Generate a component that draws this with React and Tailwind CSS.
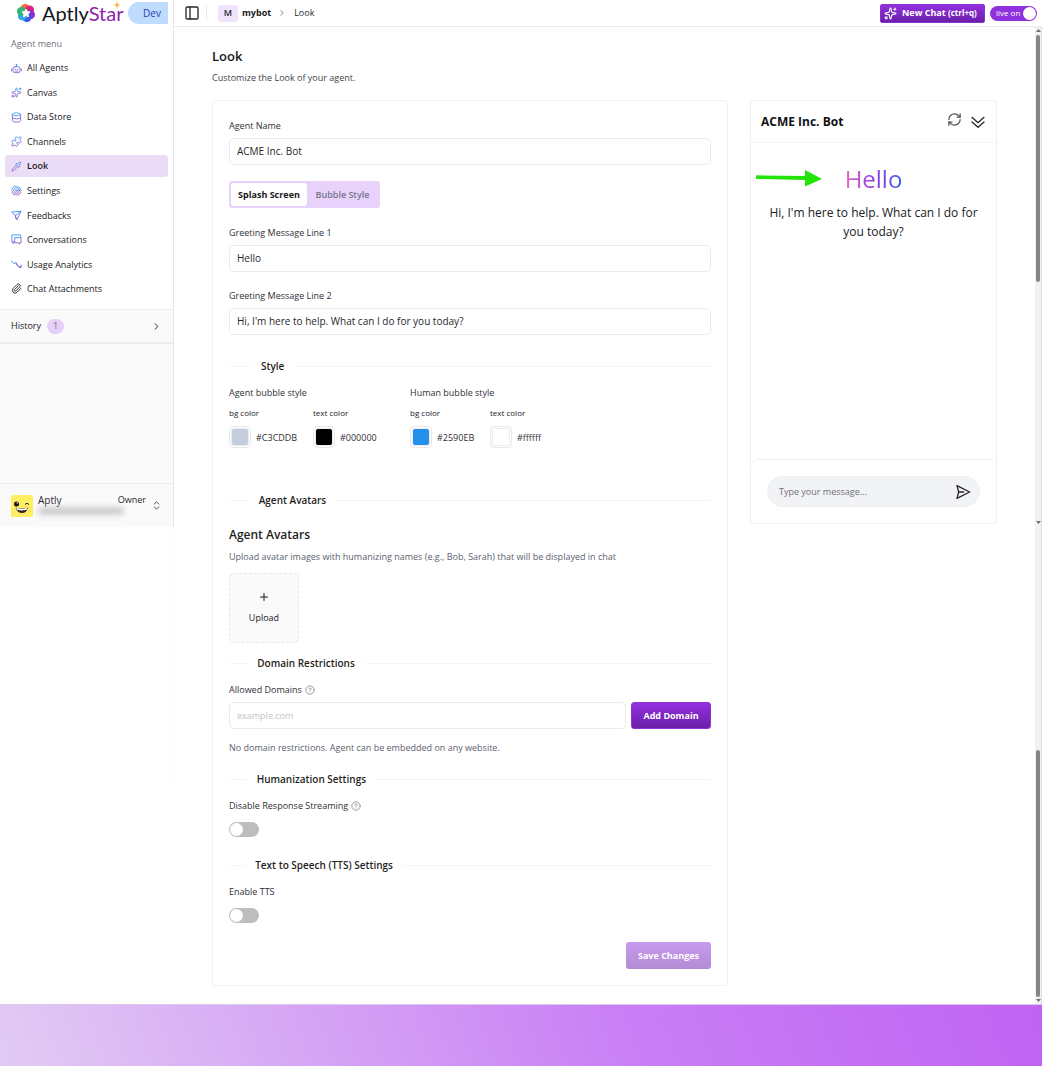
import React, { useState } from "react";
import {
  Sparkles, Database, Puzzle, Pipette, Paperclip, ChevronRight, ChevronsUpDown,
  PanelLeft, RefreshCw, Plus, CircleHelp,
} from "lucide-react";

function Glyph({ size = 12, stroke = "currentColor", strokeWidth = 2, children }) {
  return (
    <svg
      viewBox="0 0 24 24"
      width={size}
      height={size}
      fill="none"
      stroke={stroke}
      strokeWidth={strokeWidth}
      strokeLinecap="round"
      strokeLinejoin="round"
      className="shrink-0"
      aria-hidden="true"
    >
      {children}
    </svg>
  );
}

const RobotIcon = (p) => (
  <Glyph {...p}>
    <rect x="4" y="8" width="16" height="13" rx="5" />
    <path d="M12 8V3M11 3h2M1.500 13v4M22.500 13v4M9 13v1.500M15 13v1.500M9.500 17.500h5" />
  </Glyph>
);

const GearIcon = (p) => (
  <Glyph {...p}>
    <path d="M12 1.500l2.700 2.200 3.400-.5 1.200 3.200 3.200 1.300-.6 3.400L24 12l-2.100 2.800.6 3.400-3.200 1.200-1.200 3.200-3.400-.5L12 23l-2.700-1-3.400.6-1.200-3.200-3.200-1.200.6-3.400L0 12l2.100-2.800-.6-3.400 3.200-1.300 1.200-3.200 3.400.5z" transform="translate(1.200 1.200) scale(.9)" />
    <circle cx="12" cy="12" r="6" />
    <circle cx="12" cy="12" r="2" />
  </Glyph>
);

const PlaneIcon = (p) => (
  <Glyph {...p}>
    <path d="M2 4.500L22 2.500 13 21.500 9.500 12.500zM9.500 12.500L22 2.500M9.500 12.500l1 6" />
  </Glyph>
);

const ConversationIcon = (p) => (
  <Glyph {...p}>
    <path d="M6 17H2V2h19v4M9 8h13v11h-3v3l-4-3H9z" />
    <path d="M4 17v4l4-3" />
  </Glyph>
);

const TrendIcon = (p) => (
  <Glyph {...p}>
    <path d="M1 4l5 6 5-2 5 8 6 2M22 13v5h-5M11 8l1 5 4 3" />
  </Glyph>
);

const NAV = [
  ["All Agents", RobotIcon],
  ["Canvas", Sparkles],
  ["Data Store", Database],
  ["Channels", Puzzle],
  ["Look", Pipette],
  ["Settings", GearIcon],
  ["Feedbacks", PlaneIcon],
  ["Conversations", ConversationIcon],
  ["Usage Analytics", TrendIcon],
  ["Chat Attachments", Paperclip],
];

function LogoMark() {
  const petals = ["#f4683a", "#d6257e", "#8e2ad0", "#3a5be8", "#35a9e0", "#2fb774"];
  return (
    <svg viewBox="0 0 40 40" className="size-5 shrink-0" aria-hidden="true">
      {petals.map((c, i) => (
        <circle key={c} cx="20" cy="10.500" r="9" fill={c} transform={`rotate(${i * 60 - 10} 20 20)`} />
      ))}
      <path d="M20 12l2.500 5.200 5.700.8-4.200 4 1 5.700-5-2.700-5 2.700 1-5.700-4.200-4 5.700-.8z" fill="#fff" stroke="#fff" strokeWidth="2" strokeLinejoin="round" />
    </svg>
  );
}

function Sidebar() {
  return (
    <aside className="w-[174px] shrink-0">
      <svg width="0" height="0" className="absolute" aria-hidden="true">
        <defs>
          <linearGradient id="navStroke" gradientUnits="userSpaceOnUse" x1="0" y1="2" x2="0" y2="22">
            <stop offset="0" stopColor="#3ba0f2" />
            <stop offset="1" stopColor="#a24fc4" />
          </linearGradient>
        </defs>
      </svg>
      <div className="flex h-[527px] flex-col border-r border-[#e4e4e9] bg-[#fafafa]">
        <div className="flex flex-col border-b border-[#ececee] bg-white pb-[9px]">
          <div className="flex h-[26px] items-center pl-4 pr-[5px]">
            <LogoMark />
            <span className="relative ml-1.5 font-['Lato'] text-[20px] leading-6 text-[#15151c]">
              Aptly<span className="text-[#8e24aa]">Star</span>
              <svg viewBox="0 0 12 12" className="absolute right-0.5 top-0 size-2" aria-hidden="true">
                <path d="M6 0l1.300 4.700L12 6l-4.700 1.300L6 12 4.700 7.300 0 6l4.700-1.300z" fill="#f5b13a" />
              </svg>
            </span>
            <span className="ml-auto flex h-[22px] w-10 items-center justify-center rounded-l-full bg-[#bfdbfe] pl-2 text-[10px] text-[#1e40af]">
              Dev
            </span>
          </div>
          <p className="mt-[10px] pl-[11px] text-[9px] leading-4 text-[#71717a]">Agent menu</p>
          <nav className="mt-[5px] flex h-[243px] flex-col justify-between px-[5px]">
            {NAV.map(([label, Icon]) => (
              <a
                key={label}
                href="#"
                className={
                  label === "Look"
                    ? "flex h-[22px] items-center gap-[5px] rounded-[3px] bg-[#ebddf7] pl-1.5 text-[9px] font-semibold text-[#18181b]"
                    : "flex h-[22px] items-center gap-[5px] rounded-[3px] pl-1.5 text-[9px] text-[#18181b]"
                }
              >
                <Icon size={11} strokeWidth={2} stroke={label === "Chat Attachments" ? "#27272a" : "url(#navStroke)"} />
                {label}
              </a>
            ))}
          </nav>
        </div>
        <button type="button" className="flex h-[34px] items-center border-b-2 border-[#ececee] pl-[11px] pr-[11px] text-[9px] text-[#18181b]">
          History
          <span className="ml-1.5 flex h-[15px] w-[17px] items-center justify-center rounded-full bg-[#e6d0fa] text-[9px] text-[#71717a]">1</span>
          <ChevronRight size={11} className="ml-auto" />
        </button>
        <div className="mt-auto flex h-11 items-center border-t border-[#ececee] pl-[11px] pr-[11px]">
          <svg viewBox="0 0 22 22" className="size-[22px] shrink-0" aria-hidden="true">
            <rect width="22" height="22" rx="2" fill="#ffee63" />
            <circle cx="5.500" cy="9" r="2.500" fill="#111" />
            <circle cx="6.300" cy="8" r=".7" fill="#fff" />
            <path d="M14 9.500q2-2.600 4 0" fill="none" stroke="#222" strokeWidth="1" />
            <path d="M4.500 12.500q6.500 2 12.500 0-1.300 5.500-6 5.500t-6.500-5.500z" fill="#33201c" />
            <path d="M5 12.800q6 1.700 11.500 0l-.8 2q-5 1.200-9.700 0z" fill="#fff" />
          </svg>
          <div className="ml-[5px] min-w-0 flex-1 pb-1 leading-3 text-[#27272a]">
            <div className="flex justify-between">
              <span className="text-[10px]">Aptly</span>
              <span className="text-[9px]">Owner</span>
            </div>
            <div className="mt-0.5 h-1.5 w-[86px] rounded-full bg-[#bdbdc1] blur-[3px]" />
          </div>
          <ChevronsUpDown size={11} className="ml-[5px] text-[#3f3f46]" />
        </div>
      </div>
      <div className="h-[260px] border-r border-[#fafafa]" />
    </aside>
  );
}

function Header() {
  const [live, setLive] = useState(true);
  return (
    <header className="flex h-[27px] items-center border-b border-[#ececf0] pl-2.5 pr-[5px]">
      <button type="button" aria-label="Toggle sidebar" className="text-[#27272a]">
        <PanelLeft size={16} />
      </button>
      <span className="ml-1.5 h-3.5 w-px bg-[#ececf0]" />
      <span className="ml-[11px] flex h-[17px] w-5 items-center justify-center rounded-[3px] bg-[#f0e4fd] text-[9px] font-semibold text-[#27272a]">M</span>
      <a href="#" className="ml-1 text-[9px] font-bold text-[#18181b]">mybot</a>
      <ChevronRight size={10} className="ml-1.5 text-[#71717a]" />
      <span className="ml-[7px] text-[9px] text-[#27272a]">Look</span>
      <button type="button" className="ml-auto flex h-[19px] w-[105px] items-center rounded-[2px] border border-[#8a33d0] bg-linear-to-b from-[#9330e0] to-[#6a1fa8] px-[3px] text-[9px] font-bold text-white">
        <Sparkles size={13} />
        <span className="ml-[5px] whitespace-nowrap">New Chat <span className="text-[8px]">(ctrl+q)</span></span>
      </button>
      <button
        type="button"
        role="switch"
        aria-checked={live}
        onClick={() => setLive(!live)}
        className="ml-[5px] flex h-[15px] w-[47px] items-center justify-between rounded-full bg-[#8f31dd] pl-1.5 pr-px text-[8px] text-white"
      >
        live on
        <span className="size-[13px] rounded-full bg-white" />
      </button>
    </header>
  );
}

function Divider({ children }) {
  return (
    <div className="flex h-4 items-center">
      <span className="h-px w-[5%] bg-[#f5f5f7]" />
      <h3 className="shrink-0 px-2.5 text-[10px] leading-4 font-semibold text-[#1f1f23]">{children}</h3>
      <span className="h-px w-[95%] bg-[#f5f5f7]" />
    </div>
  );
}

function Field({ id, label, value }) {
  return (
    <div>
      <label htmlFor={id} className="block text-[9px] leading-[17px] text-[#303036]">{label}</label>
      <input
        id={id}
        defaultValue={value}
        className="mt-1 block h-[27px] w-full rounded-[5px] border border-[#ebebee] bg-white px-[7px] pb-0.5 text-[10px] text-[#27272a]"
      />
    </div>
  );
}

function Swatch({ id, label, value }) {
  return (
    <div>
      <label htmlFor={id} className="block text-[8px] leading-4 text-[#18181b]">{label}</label>
      <div className="mt-[5px] flex items-center">
        <input
          id={id}
          type="color"
          defaultValue={value}
          className="size-[22px] appearance-none rounded-[4px] border border-[#e8e8eb] bg-white p-px [&::-webkit-color-swatch]:rounded-[3px] [&::-webkit-color-swatch]:border [&::-webkit-color-swatch]:border-[#ececf0] [&::-webkit-color-swatch-wrapper]:p-0"
        />
        <span className="ml-[5px] text-[9px] text-[#303036]">{value}</span>
      </div>
    </div>
  );
}

function Toggle({ id }) {
  return (
    <input
      id={id}
      type="checkbox"
      role="switch"
      className="mt-2 block h-[15px] w-[30px] appearance-none rounded-full bg-[#bdbdbd] before:m-px before:block before:size-[13px] before:rounded-full before:bg-white checked:bg-[#8f31dd] checked:before:ml-4"
    />
  );
}

function LookForm() {
  return (
    <form onSubmit={(e) => e.preventDefault()} className="min-w-0 flex-1 rounded-[3px] border border-[#f0f2f8] p-4">
      <Field id="agent-name" label="Agent Name" value="ACME Inc. Bot" />
      <div role="tablist" className="mt-4 flex h-[27px] w-fit rounded-[3px] bg-[#e8d2fb] p-0.5 text-[9px]">
        <button type="button" role="tab" aria-selected="true" className="w-[76px] rounded-[3px] bg-white text-center font-bold text-[#18181b]">Splash Screen</button>
        <button type="button" role="tab" aria-selected="false" className="w-[71px] text-center font-semibold text-[#75758c]">Bubble Style</button>
      </div>
      <div className="mt-4 flex flex-col gap-[15px]">
        <Field id="line-1" label="Greeting Message Line 1" value="Hello" />
        <Field id="line-2" label="Greeting Message Line 2" value="Hi, I'm here to help. What can I do for you today?" />
      </div>

      <div className="mt-[23px]"><Divider>Style</Divider></div>
      <div className="mt-2.5 flex text-[9px] leading-[17px] text-[#303036]">
        <fieldset className="w-[181px]">
          <legend>Agent bubble style</legend>
          <div className="mt-1 flex">
            <div className="w-[84px]"><Swatch id="agent-bg" label="bg color" value="#C3CDDB" /></div>
            <Swatch id="agent-text" label="text color" value="#000000" />
          </div>
        </fieldset>
        <fieldset>
          <legend>Human bubble style</legend>
          <div className="mt-1 flex">
            <div className="w-20"><Swatch id="human-bg" label="bg color" value="#2590EB" /></div>
            <Swatch id="human-text" label="text color" value="#ffffff" />
          </div>
        </fieldset>
      </div>

      <div className="mt-11"><Divider>Agent Avatars</Divider></div>
      <h2 className="mt-[17px] text-[12px] leading-5 font-semibold text-[#1f1f23]">Agent Avatars</h2>
      <p className="mt-1 text-[9px] leading-4 text-[#5b626e]">
        Upload avatar images with humanizing names (e.g., Bob, Sarah) that will be displayed in chat
      </p>
      <button type="button" className="mt-2 flex size-[70px] flex-col items-center justify-center gap-2 rounded-[5px] border border-dashed border-[#e6e6e9] bg-[#fafafa] text-[9px] text-[#18181b]">
        <Plus size={12} strokeWidth={2} />
        Upload
      </button>

      <div className="mt-3"><Divider>Domain Restrictions</Divider></div>
      <label htmlFor="domain" className="mt-2.5 flex items-center gap-[3px] text-[9px] leading-[17px] text-[#303036]">
        Allowed Domains <CircleHelp size={10} className="text-[#8a8a90]" />
      </label>
      <div className="mt-1 flex gap-[5px]">
        <input id="domain" placeholder="example.com" className="h-[27px] min-w-0 flex-1 rounded-[5px] border border-[#ebebee] px-[7px] text-[9px] placeholder:text-[#c3c3c8]" />
        <button type="button" className="h-[27px] w-20 rounded-[3px] border border-[#8a33d0] bg-linear-to-b from-[#9330e0] to-[#6a1fa8] text-[9px] font-bold text-white">Add Domain</button>
      </div>
      <p className="mt-[11px] text-[9px] leading-4 text-[#5b626e]">No domain restrictions. Agent can be embedded on any website.</p>

      <div className="mt-[15px]"><Divider>Humanization Settings</Divider></div>
      <label htmlFor="streaming" className="mt-2.5 flex items-center gap-[3px] text-[9px] leading-[17px] text-[#303036]">
        Disable Response Streaming <CircleHelp size={10} className="text-[#8a8a90]" />
      </label>
      <Toggle id="streaming" />

      <div className="mt-5"><Divider>Text to Speech (TTS) Settings</Divider></div>
      <label htmlFor="tts" className="mt-2.5 block text-[9px] leading-[17px] text-[#303036]">Enable TTS</label>
      <Toggle id="tts" />

      <button type="submit" className="mt-[19px] ml-auto block h-[27px] w-[85px] rounded-[3px] bg-linear-to-b from-[#c79aef] to-[#b48bd4] text-[9px] font-bold text-white">Save Changes</button>
    </form>
  );
}

function ChatPreview() {
  return (
    <section className="flex h-[424px] w-[247px] shrink-0 flex-col rounded-[3px] border border-[#eef1f8]">
      <div className="flex h-[42px] items-center border-b border-[#f3f4f8] pl-2.5 pr-2.5">
        <h2 className="text-[12px] font-bold text-[#111114]">ACME Inc. Bot</h2>
        <button type="button" aria-label="Restart chat" className="ml-auto pb-1 text-[#52525b]"><RefreshCw size={15} strokeWidth={2} /></button>
        <button type="button" aria-label="Collapse chat" className="ml-2 text-[#27272a]">
          <Glyph size={16} strokeWidth={2}><path d="M3 5l9 8 9-8M3 12l9 8 9-8" /></Glyph>
        </button>
      </div>
      <div className="relative flex-1 px-4 pt-5 text-center">
        <svg viewBox="0 0 68 18" className="absolute left-1 top-[26px] h-[18px] w-[68px]" aria-hidden="true">
          <path d="M1 6.300L50 7V1l17 9-17 7.500V11L1 10z" fill="#23e408" />
        </svg>
        <h1 className="mx-auto w-fit bg-linear-to-r from-[#e966b8] via-[#8b35e6] to-[#2b62ea] bg-clip-text text-[24px] leading-8 font-medium text-transparent">Hello</h1>
        <p className="mt-2 text-[12px] leading-[19px] text-[#202024]">Hi, I'm here to help. What can I do for you today?</p>
      </div>
      <div className="flex h-16 items-center rounded-[8px] rounded-b-none border-t border-[#eceef2] px-4">
        <div className="flex h-[31px] flex-1 items-center rounded-full border border-[#ebeff6] bg-[#f2f3f5] pl-[11px] pr-2">
          <input aria-label="Message" placeholder="Type your message..." className="min-w-0 flex-1 bg-transparent text-[9px] placeholder:text-[#70707a]" />
          <button type="button" aria-label="Send" className="text-[#27272a]">
            <Glyph size={16} strokeWidth={2}><path d="M3 2.500L22 12 3 21.500 5.500 12zM5.500 12H13" /></Glyph>
          </button>
        </div>
      </div>
    </section>
  );
}

function Arrow({ up }) {
  return (
    <svg viewBox="0 0 7 7" className="size-[7px] shrink-0" aria-hidden="true">
      <path d={up ? "M1 5L3.500 2 6 5z" : "M1 2L3.500 5 6 2z"} fill="#6f6f6f" />
    </svg>
  );
}

function ScrollRail() {
  return (
    <div aria-hidden="true" className="flex w-[7px] shrink-0 flex-col items-center border-r border-[#e4dcec] bg-[#f1f1f1]">
      <Arrow up />
      <span className="mt-px h-[247px] w-1 rounded-full bg-[#858585]" />
      <span className="mt-[237px]"><Arrow /></span>
      <span className="mt-auto h-[247px] w-1 rounded-full bg-[#858585]" />
      <Arrow />
    </div>
  );
}

export default function App() {
  return (
    <div className="flex min-h-screen flex-col bg-white font-['Open_Sans',sans-serif]">
      <div className="flex">
        <Sidebar />
        <div className="flex min-w-0 flex-1 flex-col">
          <Header />
          <div className="flex flex-1">
            <main className="min-w-0 flex-1 px-[38px] pt-[19px] pb-[18px]">
              <h1 className="text-[13px] leading-5 font-semibold text-[#18181b]">Look</h1>
              <p className="mt-1 text-[9px] leading-4 text-[#3f3f46]">Customize the Look of your agent.</p>
              <div className="mt-3.5 flex items-start gap-[22px]">
                <LookForm />
                <ChatPreview />
              </div>
            </main>
            <ScrollRail />
          </div>
        </div>
      </div>
      <footer className="min-h-[61px] flex-1 border-t border-[#dcc8ea] bg-linear-[70deg] from-[#e2cbf4] via-[#c97ff5] via-60% to-[#bf63f3]" />
    </div>
  );
}
